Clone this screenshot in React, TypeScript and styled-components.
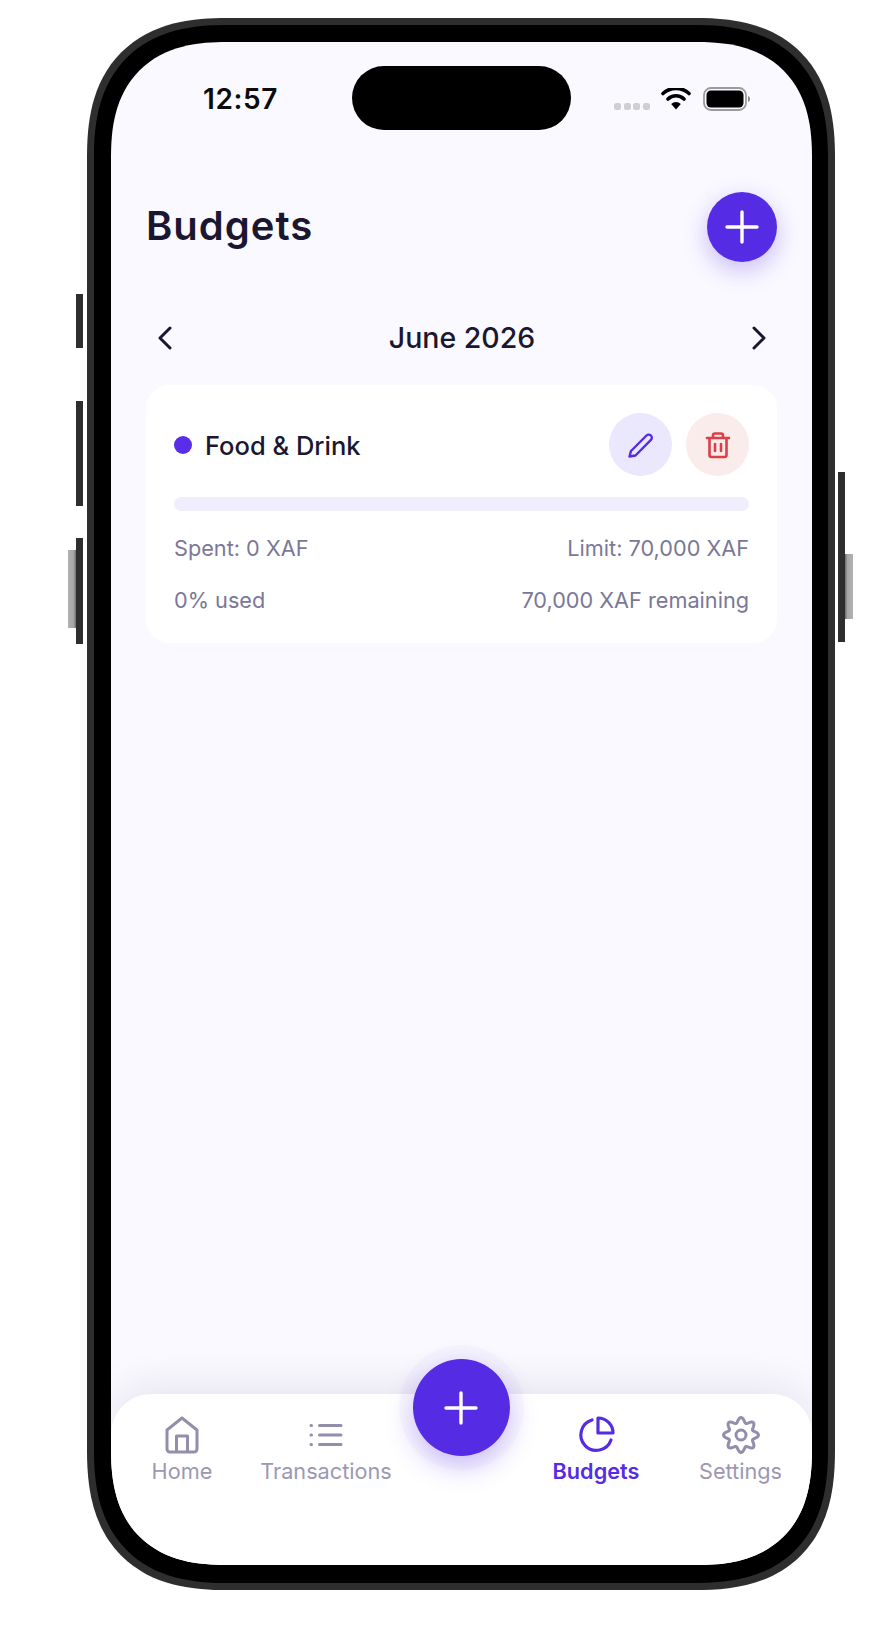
import React from 'react';
import styled, { createGlobalStyle } from 'styled-components';

const Global = createGlobalStyle`
  html, body {
    margin: 0;
    padding: 0;
    background: #fff;
    font-family: Inter, "Noto Sans", "Liberation Sans", sans-serif;
  }
`;

const Page = styled.div`
  width: 896px;
  height: 1636px;
  padding: 18px 0 0 87px;
  box-sizing: border-box;
`;

// 폰 프레임
const Frame = styled.div`
  position: relative;
  width: 748px;
  height: 1572px;
  box-sizing: border-box;
  padding: 17px;
  background: #000;
  border: 7px solid #2e2e2e;
  border-radius: 140px;
  corner-shape: superellipse(1.3);
`;

const SideButton = styled.div<{ $side: 'left' | 'right'; $top: number; $height: number }>`
  position: absolute;
  top: ${(p) => p.$top}px;
  height: ${(p) => p.$height}px;
  ${(p) => (p.$side === 'left' ? 'left: -18px;' : 'right: -17px;')}
  width: 7px;
  background: #2e2e2e;
`;

const SideShine = styled.div<{ $side: 'left' | 'right'; $top: number; $height: number }>`
  position: absolute;
  top: ${(p) => p.$top}px;
  height: ${(p) => p.$height}px;
  ${(p) => (p.$side === 'left' ? 'left: -26px;' : 'right: -25px;')}
  width: 8px;
  background: linear-gradient(
    ${(p) => (p.$side === 'left' ? 'to right' : 'to left')},
    #b2b2b2,
    #a6a6a6 70%,
    #6a6a6a
  );
`;

const Screen = styled.div`
  width: 701px;
  height: 1523px;
  border-radius: 116px;
  corner-shape: superellipse(1.3);
  overflow: hidden;
  background: #faf9ff;
  display: flex;
  flex-direction: column;
  color: #1b1730;
`;

const StatusBar = styled.div`
  display: flex;
  align-items: center;
  height: 64px;
  margin-top: 24px;
`;

const Clock = styled.div`
  width: 241px;
  box-sizing: border-box;
  padding: 1px 0 0 92px;
  font-size: 28px;
  font-weight: 600;
  letter-spacing: 0.6px;
  color: #0c0c0c;
`;

const Island = styled.div`
  width: 219px;
  height: 64px;
  border-radius: 32px;
  background: #000;
`;

const StatusIcons = styled.div`
  display: flex;
  align-items: center;
  padding: 8px 0 6px 43px;
`;

const Dots = styled.div`
  display: flex;
  gap: 2.5px;
  margin: 14px 11px 0 0;
`;

const Dot = styled.span`
  width: 7px;
  height: 7px;
  border-radius: 2.5px;
  background: #cfcfcf;
`;

const Battery = styled.svg`
  margin-left: 12px;
`;

const Body = styled.div`
  flex: 1;
  padding: 0 35px;
`;

const Header = styled.div`
  display: flex;
  align-items: center;
  justify-content: space-between;
  margin-top: 62px;
  height: 70px;
`;

const Title = styled.h1`
  margin: 0;
  padding-bottom: 4px;
  font-size: 40px;
  font-weight: 600;
  letter-spacing: 1px;
`;

const AddButton = styled.div`
  width: 70px;
  height: 70px;
  border-radius: 50%;
  background: #552ce4;
  box-shadow: 0 8px 24px rgba(85, 44, 228, 0.3);
  display: flex;
  align-items: center;
  justify-content: center;
`;

const MonthRow = styled.div`
  display: flex;
  align-items: center;
  justify-content: space-between;
  margin-top: 53px;
  height: 46px;
  padding: 0 10px 0 11px;
`;

const MonthLabel = styled.div`
  padding-bottom: 2px;
  font-size: 28.5px;
  font-weight: 500;
`;

const Card = styled.div`
  margin-top: 24px;
  padding: 28px 28px 27px;
  border-radius: 24px;
  background: #fff;
`;

const CardHead = styled.div`
  display: flex;
  align-items: center;
  height: 63px;
`;

const ColorDot = styled.span`
  width: 18px;
  height: 18px;
  border-radius: 50%;
  background: #5a2de8;
  margin-right: 13px;
`;

const CardName = styled.div`
  flex: 1;
  padding-top: 1px;
  font-size: 25.5px;
  font-weight: 500;
`;

const RoundButton = styled.div<{ $bg: string }>`
  width: 63px;
  height: 63px;
  margin-left: 14px;
  border-radius: 50%;
  background: ${(p) => p.$bg};
  display: flex;
  align-items: center;
  justify-content: center;
`;

const Progress = styled.div`
  margin-top: 21px;
  height: 14px;
  border-radius: 7px;
  background: #f0eefc;
`;

const StatRow = styled.div<{ $gap: number }>`
  display: flex;
  justify-content: space-between;
  margin-top: ${(p) => p.$gap}px;
  font-size: 21.7px;
  line-height: 32px;
  color: #7b7797;
`;

// 하단 탭 바
const Nav = styled.div`
  height: 171px;
  border-radius: 40px 40px 0 0;
  background: #fff;
  box-shadow: 0 -8px 40px rgba(30, 20, 60, 0.09);
  display: grid;
  grid-template-columns: 142px 146px 124px 146px 143px;
  align-items: start;
`;

const NavItem = styled.div<{ $active?: boolean }>`
  display: flex;
  flex-direction: column;
  align-items: center;
  padding-top: 20px;
  font-size: 21.7px;
  line-height: 30px;
  white-space: nowrap;
  color: ${(p) => (p.$active ? '#552ce4' : '#9c98b3')};
  font-weight: ${(p) => (p.$active ? 600 : 400)};
`;

const NavIcon = styled.div`
  height: 42px;
  display: flex;
  align-items: center;
`;

const Fab = styled.div`
  justify-self: center;
  width: 97px;
  height: 97px;
  margin-top: -35px;
  border-radius: 50%;
  background: #552ce4;
  box-shadow: 0 0 0 14px rgba(85, 44, 228, 0.025), 0 10px 28px rgba(85, 44, 228, 0.3);
  display: flex;
  align-items: center;
  justify-content: center;
`;

const Plus = () => (
  <svg width="36" height="36" viewBox="0 0 36 36" fill="none" stroke="#fff" strokeWidth="3.4" strokeLinecap="round">
    <path d="M18 3v30M3 18h30" />
  </svg>
);

const Chevron = ({ flip }: { flip?: boolean }) => (
  <svg width="16" height="24" viewBox="0 0 16 24" fill="none" stroke="#1b1730" strokeWidth="3" strokeLinecap="round" strokeLinejoin="round">
    <path d={flip ? 'M3 2l10 10L3 22' : 'M13 2L3 12l10 10'} />
  </svg>
);

// 톱니 8개짜리 기어 외곽선
const gearPath = Array.from({ length: 96 }, (_, i) => {
  const a = (i / 96) * Math.PI * 2;
  const r = 15 + 2.5 * Math.cos(8 * a);
  return `${i === 0 ? 'M' : 'L'}${(20 + r * Math.cos(a)).toFixed(2)} ${(20 + r * Math.sin(a)).toFixed(2)}`;
}).join('') + 'Z';

export default function App() {
  return (
    <>
      <Global />
      <Page>
        <Frame>
          <SideButton $side="left" $top={269} $height={54} />
          <SideButton $side="left" $top={376} $height={105} />
          <SideButton $side="left" $top={513} $height={106} />
          <SideShine $side="left" $top={525} $height={78} />
          <SideButton $side="right" $top={447} $height={170} />
          <SideShine $side="right" $top={529} $height={65} />
          <Screen>
            <StatusBar>
              <Clock>12:57</Clock>
              <Island />
              <StatusIcons>
                <Dots>
                  <Dot />
                  <Dot />
                  <Dot />
                  <Dot />
                </Dots>
                <svg width="30" height="22" viewBox="0 0 30 22" fill="none">
                  <path d="M15 21.500l-4.800-5.500a7 7 0 0 1 9.600 0z" fill="#000" />
                  <path d="M7 11a11.500 11.500 0 0 1 16 0M2 5.500a19 19 0 0 1 26 0" stroke="#000" strokeWidth="3.6" strokeLinecap="round" />
                </svg>
                <Battery width="48" height="24" viewBox="0 0 48 24" fill="none">
                  <rect x="1" y="1" width="42" height="22" rx="7" stroke="#9b9b9b" strokeWidth="1.800" />
                  <rect x="3.500" y="3.500" width="37" height="17" rx="4.500" fill="#000" />
                  <path d="M45 9c1.500.5 2 1.800 2 3s-.5 2.500-2 3z" fill="#8a8a8a" />
                </Battery>
              </StatusIcons>
            </StatusBar>
            <Body>
              <Header>
                <Title>Budgets</Title>
                <AddButton>
                  <Plus />
                </AddButton>
              </Header>
              <MonthRow>
                <Chevron />
                <MonthLabel>June 2026</MonthLabel>
                <Chevron flip />
              </MonthRow>
              <Card>
                <CardHead>
                  <ColorDot />
                  <CardName>Food &amp; Drink</CardName>
                  <RoundButton $bg="#ebe8fd">
                    <svg width="30" height="30" viewBox="0 0 30 30" fill="none" stroke="#552ce4" strokeWidth="2.400" strokeLinejoin="round">
                      <path d="M3.500 26.500L5 21L20.500 5.500a3.100 3.100 0 0 1 4.400 4.400L9.500 25.500z" />
                    </svg>
                  </RoundButton>
                  <RoundButton $bg="#f9ecea">
                    <svg width="28" height="28" viewBox="0 0 28 28" fill="none" stroke="#dd3f46" strokeWidth="2.600" strokeLinecap="round" strokeLinejoin="round">
                      <path d="M3 7h22M9 7V4.500a2 2 0 0 1 2-2h6a2 2 0 0 1 2 2V7M5.500 7v17a2 2 0 0 0 2 2h13a2 2 0 0 0 2-2V7M11 13v7M17 13v7" />
                    </svg>
                  </RoundButton>
                </CardHead>
                <Progress />
                <StatRow $gap={21}>
                  <span>Spent: 0 XAF</span>
                  <span>Limit: 70,000 XAF</span>
                </StatRow>
                <StatRow $gap={20}>
                  <span>0% used</span>
                  <span>70,000 XAF remaining</span>
                </StatRow>
              </Card>
            </Body>
            <Nav>
              <NavItem>
                <NavIcon>
                  <svg width="34" height="38" viewBox="0 0 34 38" fill="none" stroke="#928eab" strokeWidth="3" strokeLinejoin="round">
                    <path d="M2 14L17 2l15 12v19a3 3 0 0 1-3 3H5a3 3 0 0 1-3-3zM11.500 36V20h11v16" />
                  </svg>
                </NavIcon>
                Home
              </NavItem>
              <NavItem>
                <NavIcon>
                  <svg width="34" height="24" viewBox="0 0 34 24" fill="none" stroke="#928eab" strokeWidth="3" strokeLinecap="round">
                    <path d="M10.500 2.500h21.500M10.500 12h21.500M10.500 21.500h21.500M2 2.500h.5M2 12h.5M2 21.500h.5" />
                  </svg>
                </NavIcon>
                Transactions
              </NavItem>
              <Fab>
                <Plus />
              </Fab>
              <NavItem $active>
                <NavIcon>
                  <svg width="38" height="38" viewBox="0 0 38 38" fill="none" stroke="#552ce4" strokeWidth="3.200" strokeLinecap="round" strokeLinejoin="round">
                    <path d="M15 4a15.500 15.500 0 1 0 19 20M21 2v15h15A15 15 0 0 0 21 2z" />
                  </svg>
                </NavIcon>
                Budgets
              </NavItem>
              <NavItem>
                <NavIcon>
                  <svg width="40" height="40" viewBox="0 0 40 40" fill="none" stroke="#928eab" strokeWidth="3" strokeLinejoin="round">
                    <path d={gearPath} />
                    <circle cx="20" cy="20" r="5" />
                  </svg>
                </NavIcon>
                Settings
              </NavItem>
            </Nav>
          </Screen>
        </Frame>
      </Page>
    </>
  );
}
